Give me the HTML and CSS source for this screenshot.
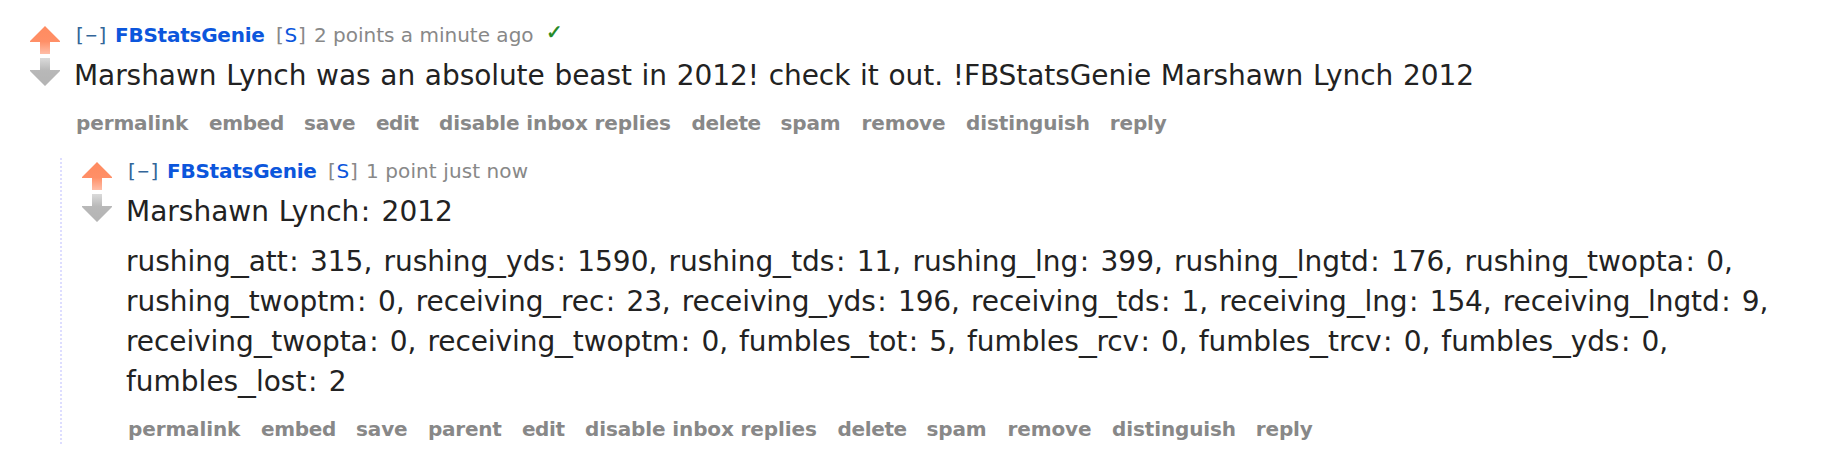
FILE: index.html
```
<!DOCTYPE html>
<html lang="en">
<head>
<meta charset="utf-8">
<title>Comments</title>
<link rel="stylesheet" href="styles.css">
</head>
<body>
<svg width="0" height="0" class="defs">
  <defs>
    <linearGradient id="upFill" x1="0" y1="0" x2="0" y2="1">
      <stop offset="0" stop-color="#ff8b60"/><stop offset=".55" stop-color="#ff8f67"/><stop offset="1" stop-color="#ffbea8"/>
    </linearGradient>
    <linearGradient id="downFill" x1="0" y1="0" x2="0" y2="1">
      <stop offset="0" stop-color="#dadada"/><stop offset=".45" stop-color="#b8b8b8"/><stop offset="1" stop-color="#b4b4b4"/>
    </linearGradient>
  </defs>
</svg>
<div class="comment root">
  <div class="votes">
    <svg class="arrow" viewBox="0 0 30 28"><path fill="url(#upFill)" d="M15 0 30 15V16H20V28H10V16H0V15Z"/></svg>
    <svg class="arrow" viewBox="0 0 30 28"><path fill="url(#downFill)" d="M10 0H20V12H30V13L15 28 0 13V12H10Z"/></svg>
  </div>
  <div class="entry">
    <div class="tagline"><a class="expand">[<span>−</span>]</a><a class="author">FBStatsGenie</a><span class="submitter">[<a>S</a>]</span><span class="time">2 points a minute ago</span><span class="check">✓</span></div>
    <p class="body intro">Marshawn Lynch was an absolute beast in 2012! check it out. !FBStatsGenie Marshawn Lynch 2012</p>
    <div class="menu"><a class="w1">permalink</a><a class="w2">embed</a><a class="w3">save</a><a class="w4">edit</a><a class="w5">disable inbox replies</a><a class="w6">delete</a><a class="w7">spam</a><a class="w8">remove</a><a class="w9">distinguish</a><a>reply</a></div>
  </div>
</div>
<div class="comment child">
  <div class="votes">
    <svg class="arrow" viewBox="0 0 30 28"><path fill="url(#upFill)" d="M15 0 30 15V16H20V28H10V16H0V15Z"/></svg>
    <svg class="arrow" viewBox="0 0 30 28"><path fill="url(#downFill)" d="M10 0H20V12H30V13L15 28 0 13V12H10Z"/></svg>
  </div>
  <div class="entry">
    <div class="tagline"><a class="expand">[<span>−</span>]</a><a class="author">FBStatsGenie</a><span class="submitter">[<a>S</a>]</span><span class="time now">1 point just now</span></div>
    <p class="body">Marshawn Lynch<b>:</b> 2012</p>
    <p class="body stats"><span>rushing<i>_</i>att<b>:</b> 315,</span> <span>rushing<i>_</i>yds<b>:</b> 1590,</span> <span>rushing<i>_</i>tds<b>:</b> 11,</span> <span>rushing<i>_</i>lng<b>:</b> 399,</span> <span>rushing<i>_</i>lngtd<b>:</b> 176,</span> <span>rushing<i>_</i>twopta<b>:</b> 0,</span> <span>rushing<i>_</i>twoptm<b>:</b> 0,</span> <span class="tight">receiving<i>_</i>rec<b>:</b> 23,</span> <span class="tight">receiving<i>_</i>yds<b>:</b> 196,</span> <span class="tight">receiving<i>_</i>tds<b>:</b> 1,</span> <span class="tight">receiving<i>_</i>lng<b>:</b> 154,</span> <span class="tight">receiving<i>_</i>lngtd<b>:</b> 9,</span> <span class="tight">receiving<i>_</i>twopta<b>:</b> 0,</span> <span class="tight">receiving<i>_</i>twoptm<b>:</b> 0,</span> <span class="tight">fumbles<i>_</i>tot<b>:</b> 5,</span> <span class="tight">fumbles<i>_</i>rcv<b>:</b> 0,</span> <span class="tight">fumbles<i>_</i>trcv<b>:</b> 0,</span> <span class="tight">fumbles<i>_</i>yds<b>:</b> 0,</span> <span>fumbles<i>_</i>lost<b>:</b> 2</span></p>
    <div class="menu"><a class="w1">permalink</a><a class="w2">embed</a><a class="w3">save</a><a class="w10">parent</a><a class="w4">edit</a><a class="w5">disable inbox replies</a><a class="w6">delete</a><a class="w7">spam</a><a class="w8">remove</a><a class="w9">distinguish</a><a>reply</a></div>
  </div>
</div>
</body>
</html>
```
FILE: styles.css
```
* { box-sizing: border-box; }
body { margin: 0; background: #fff; font-family: "DejaVu Sans", Verdana, sans-serif; }
.defs { display: block; height: 0; }
.comment { display: flex; }
.root { padding: 23px 0 0 30px; }
.child { margin: 23px 0 0 60px; padding: 1px 0 3px 20px; border-left: 2px dotted #ddf; }
.votes { width: 30px; padding-top: 3px; display: flex; flex-direction: column; gap: 4px; flex: none; }
.arrow { display: block; width: 30px; height: 28px; }
.entry { padding-left: 14px; flex: 1; }
.tagline { display: flex; height: 24px; line-height: 24px; font-size: 20px; padding-left: 2px; color: #888; white-space: nowrap; }
.expand { width: 39px; color: #369; }
.expand span { display: inline-block; transform: scaleX(.78); margin: 0 -1px; }
.author { width: 161px; color: #0c56dc; font-weight: bold; letter-spacing: -.24px; }
.submitter { width: 38px; letter-spacing: .8px; }
.submitter a { color: #0c56dc; }
.time { width: 232px; }
.now { letter-spacing: .1px; }
.check { color: #228822; font-size: 20px; line-height: 19px; -webkit-text-stroke: .5px #228822; }
.body { margin: 9px 0 0; font-size: 28px; line-height: 40px; color: #222; word-spacing: .95px; }
.intro { letter-spacing: -.07px; }
.stats { margin-top: 10px; max-width: 1670px; letter-spacing: -.01px; }
.stats span { margin-right: 1.3px; white-space: nowrap; }
.stats .tight { letter-spacing: -.09px; }
.body b { font-weight: normal; padding: 0 1.5px; }
.body i { display: inline-block; font-style: normal; transform: scaleX(1.27); transform-origin: left; margin-right: 3.8px; }
.menu { display: flex; height: 24px; margin-top: 15px; padding-left: 2px; line-height: 24px; font-size: 20px; font-weight: bold; color: #888; letter-spacing: -.12px; white-space: nowrap; }
.w1 { width: 133px; }
.w2 { width: 95px; letter-spacing: -.35px; }
.w3 { width: 72px; }
.w4 { width: 63px; letter-spacing: -.45px; }
.w5 { width: 252.5px; }
.w6 { width: 89px; letter-spacing: -.35px; }
.w7 { width: 81px; }
.w8 { width: 104.5px; }
.w9 { width: 143.7px; }
.w10 { width: 94px; letter-spacing: -.25px; }
```
